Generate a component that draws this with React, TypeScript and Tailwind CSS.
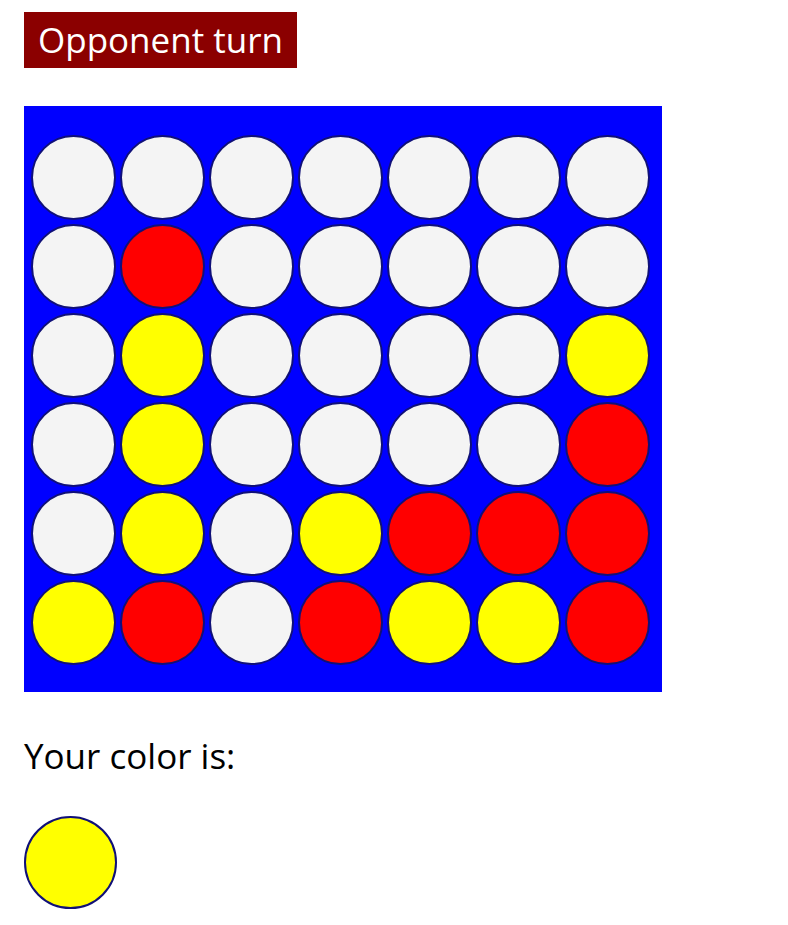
const board = [
  "EEEEEEE",
  "EREEEEE",
  "EYEEEEY",
  "EYEEEER",
  "EYEYRRR",
  "YRERYYR",
];

const fill: Record<string, string> = {
  E: "bg-[#f4f4f4]",
  R: "bg-[#ff0000]",
  Y: "bg-[#ffff00]",
};

function Disc({ c }: { c: string }) {
  return <div className={`h-[85px] w-[85px] rounded-full border-2 border-[#101078] ${fill[c]}`} />;
}

export default function App() {
  return (
    <div className="bg-white pl-6 pt-3 text-[35px] font-['Segoe_UI','Open_Sans',sans-serif]">
      <div className="inline-block h-[56px] bg-[#8b0000] px-[14px] leading-[56px] text-white">
        Opponent turn
      </div>

      <div className="mt-[38px] h-[586px] w-[638px] bg-[#0000ff] pl-[7px] pt-[29px]">
        <div className="grid grid-cols-[repeat(7,85px)] gap-[4px]">
          {board.map((row, r) =>
            row.split("").map((c, i) => <Disc key={`${r}-${i}`} c={c} />)
          )}
        </div>
      </div>

      <p className="mt-[40px] leading-[48px] text-black">Your color is:</p>

      <div className="mt-[36px] h-[93px] w-[93px] rounded-full border-2 border-[#101078] bg-[#ffff00]" />
    </div>
  );
}
